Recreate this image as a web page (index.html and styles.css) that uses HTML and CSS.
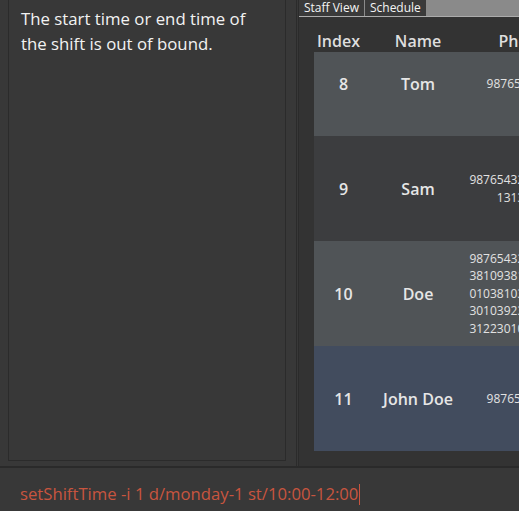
FILE: index.html
```html
<!DOCTYPE html>
<html>
<head>
<meta charset="utf-8">
<link rel="stylesheet" href="styles.css">
</head>
<body>
<div class="app">
  <div class="main">
    <div class="result-pane">
      <div class="result-box">The start time or end time of the shift is out of bound.</div>
    </div>
    <div class="list-pane">
      <div class="tab-pane">
        <div class="tab-header">
          <div class="tab">Staff View</div>
          <div class="tab">Schedule</div>
        </div>
        <div class="tab-content">
          <div class="list-header">
            <div class="h-idx">Index</div>
            <div class="h-name">Name</div>
            <div class="h-phone">Phone</div>
          </div>
          <div class="row odd partial">
            <div class="c-idx">8</div>
            <div class="c-name">Tom</div>
            <div class="c-phone">98765432</div>
          </div>
          <div class="row even">
            <div class="c-idx">9</div>
            <div class="c-name">Sam</div>
            <div class="c-phone">9876543213131<br>13131</div>
          </div>
          <div class="row odd">
            <div class="c-idx">10</div>
            <div class="c-name">Doe</div>
            <div class="c-phone">9876543210381<br>3810938103810<br>0103810392301<br>3010392301223<br>3122301039231</div>
          </div>
          <div class="row selected">
            <div class="c-idx">11</div>
            <div class="c-name">John Doe</div>
            <div class="c-phone">98765432</div>
          </div>
        </div>
      </div>
    </div>
  </div>
  <div class="command"><span class="cmd-text">setShiftTime -i 1 d/monday-1 st/10:00-12:00</span><span class="caret"></span></div>
</div>
</body>
</html>
```
FILE: styles.css
```css
html, body {
  margin: 0;
  padding: 0;
}
body {
  width: 519px;
  height: 511px;
  overflow: hidden;
  background: #383838;
  font-family: "Open Sans", "DejaVu Sans", sans-serif;
}
.app {
  display: flex;
  flex-direction: column;
  height: 511px;
}
.main {
  display: flex;
  height: 466px;
}
.result-pane {
  width: 296px;
  flex-shrink: 0;
  box-sizing: border-box;
  padding: 0 10px 5px 8px;
  display: flex;
}
.result-box {
  flex: 1;
  border: 1px solid #2b2b2b;
  border-top: none;
  padding: 7px 12px;
  color: #f2f2f2;
  font-size: 16.8px;
  line-height: 24.5px;
}
.list-pane {
  flex: 1;
  min-width: 0;
  border-left: 1px solid #2b2b2b;
  padding-left: 1px;
  display: flex;
}
.tab-pane {
  flex: 1;
  min-width: 0;
  border-left: 1px solid #2b2b2b;
  display: flex;
  flex-direction: column;
  overflow: hidden;
}
.tab-header {
  display: flex;
  height: 16px;
  background: #8a8a8a;
  border-bottom: 1px solid #acacac;
  flex-shrink: 0;
}
.tab {
  background: #3a3a3a;
  color: #f4f4f4;
  font-size: 12px;
  line-height: 15px;
  padding: 0 5px 0 5px;
  margin-right: 1px;
}
.tab-content {
  flex: 1;
  background: #333333;
  padding-left: 15px;
  overflow: hidden;
}
.list-header {
  display: flex;
  align-items: flex-end;
  height: 35px;
  font-size: 16px;
  font-weight: 600;
  line-height: 22px;
  color: #dedede;
  white-space: nowrap;
}
.h-idx {
  width: 49px;
  text-align: center;
  flex-shrink: 0;
}
.h-name {
  width: 110px;
  text-align: center;
  flex-shrink: 0;
}
.h-phone {
  width: 100px;
  text-align: center;
  flex-shrink: 0;
}
.row {
  display: flex;
  align-items: center;
  height: 105px;
  width: 260px;
  box-sizing: border-box;
  color: #e6e6e6;
}
.row.partial {
  height: 84px;
  padding-bottom: 21px;
}
.odd {
  background: #505457;
}
.even {
  background: #3c3d3f;
}
.selected {
  background: #424c5e;
}
.c-idx {
  width: 59px;
  flex-shrink: 0;
  text-align: center;
  font-size: 16px;
  font-weight: 600;
}
.c-name {
  width: 90px;
  flex-shrink: 0;
  text-align: center;
  font-size: 16px;
  font-weight: 600;
  white-space: nowrap;
}
.c-phone {
  width: 102px;
  flex-shrink: 0;
  text-align: center;
  font-size: 12px;
  line-height: 17.5px;
  color: #e2e2e2;
}
.command {
  height: 43px;
  border-top: 2px solid #2a2a2a;
  padding: 15px 0 0 20px;
  box-sizing: border-box;
  display: flex;
  align-items: flex-start;
  color: #c8553f;
  font-size: 16.7px;
  line-height: 22px;
  white-space: nowrap;
}
.caret {
  display: inline-block;
  width: 0;
  height: 21px;
  border-left: 1.5px solid #c8553f;
  margin-top: 1px;
  margin-left: 1px;
}
```
